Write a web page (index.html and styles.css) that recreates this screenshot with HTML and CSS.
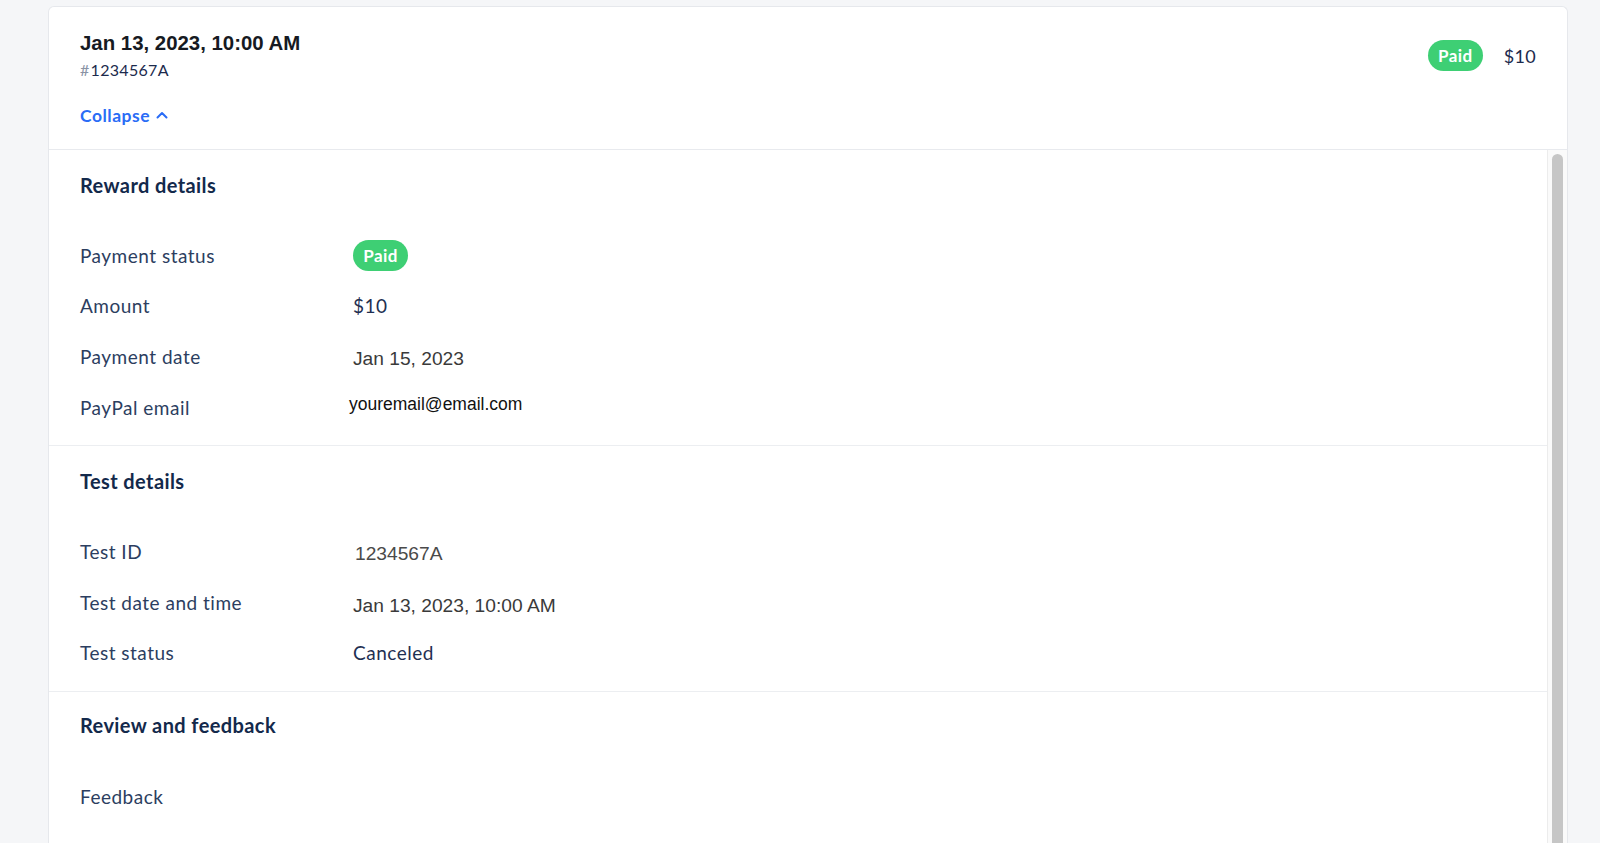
FILE: index.html
```html
<!DOCTYPE html>
<html lang="en">
<head>
<meta charset="utf-8">
<title>Reward details</title>
<link rel="stylesheet" href="styles.css">
</head>
<body>
<div class="card">
  <header class="card-head">
    <div class="head-left">
      <h1 class="title">Jan 13, 2023, 10:00 AM</h1>
      <div class="test-id"><span class="hash">#</span>1234567A</div>
      <a class="collapse" href="#">Collapse
        <svg class="chev" width="12" height="8" viewBox="0 0 12 8"><polyline points="1.5,6.5 6,2 10.5,6.5" fill="none" stroke="currentColor" stroke-width="2" stroke-linecap="round" stroke-linejoin="round"/></svg>
      </a>
    </div>
    <div class="head-right">
      <span class="badge">Paid</span>
      <span class="head-amount">$10</span>
    </div>
  </header>
  <div class="card-body">
    <div class="details">
      <section class="section">
        <h2 class="sec-title">Reward details</h2>
        <div class="rows">
          <div class="label">Payment status</div>
          <div class="value"><span class="badge">Paid</span></div>
          <div class="label">Amount</div>
          <div class="value ui">$10</div>
          <div class="label">Payment date</div>
          <div class="value plain">Jan 15, 2023</div>
          <div class="label">PayPal email</div>
          <div class="value email">youremail@email.com</div>
        </div>
      </section>
      <section class="section">
        <h2 class="sec-title">Test details</h2>
        <div class="rows">
          <div class="label">Test ID</div>
          <div class="value plain light id">1234567A</div>
          <div class="label">Test date and time</div>
          <div class="value plain low">Jan 13, 2023, 10:00 AM</div>
          <div class="label">Test status</div>
          <div class="value ui">Canceled</div>
        </div>
      </section>
      <section class="section last">
        <h2 class="sec-title">Review and feedback</h2>
        <div class="rows">
          <div class="label">Feedback</div>
          <div class="value"></div>
        </div>
      </section>
    </div>
    <div class="scrollbar"><div class="thumb"></div></div>
  </div>
</div>
</body>
</html>
```

FILE: styles.css
```css
html, body {
  margin: 0;
  padding: 0;
  height: 100%;
  overflow: hidden;
}
body {
  background: #f5f6f8;
  font-family: "Lato", "Liberation Sans", sans-serif;
  color: #2c3e5f;
}
.card {
  margin: 6px 0 0 48px;
  width: 1518px;
  background: #fff;
  border: 1px solid #e6e8ec;
  border-bottom: none;
  border-radius: 6px 6px 0 0;
  height: 900px;
  display: flex;
  flex-direction: column;
}
.card-head {
  display: flex;
  justify-content: space-between;
  align-items: flex-start;
  padding: 24px 31px 23px 31px;
  border-bottom: 1px solid #e8eaee;
}
.title {
  margin: 0;
  font-family: "Liberation Sans", Arial, sans-serif;
  font-weight: 700;
  font-size: 20.4px;
  line-height: 24px;
  color: #161a22;
}
.test-id {
  margin-top: 6px;
  font-size: 16px;
  line-height: 18px;
  letter-spacing: 0.3px;
  color: #1c2a4d;
}
.hash {
  color: #8a93a5;
  margin-right: 1px;
}
.collapse {
  margin-top: 27px;
  display: flex;
  align-items: center;
  gap: 6px;
  font-size: 17.5px;
  line-height: 20px;
  letter-spacing: 0.5px;
  font-weight: 700;
  color: #2a6cf6;
  text-decoration: none;
}
.chev { display: block; margin-top: -2px; }
.head-right {
  display: flex;
  align-items: center;
  gap: 21px;
  margin-top: 9px;
}
.badge {
  display: inline-flex;
  align-items: center;
  justify-content: center;
  width: 55px;
  height: 31px;
  border-radius: 16px;
  background: #3ecf74;
  color: #fff;
  font-weight: 700;
  font-size: 17px;
  letter-spacing: 0.4px;
}
.head-amount {
  font-size: 18px;
  letter-spacing: 0.3px;
  color: #1c2a4d;
}
.card-body {
  flex: 1;
  display: flex;
  min-height: 0;
}
.details {
  flex: 1;
}
.section {
  padding: 24px 31px 13px 31px;
  border-bottom: 1px solid #eceef1;
}
.section.last {
  border-bottom: none;
  padding-top: 22px;
}
.sec-title {
  margin: 0;
  font-size: 20px;
  line-height: 22px;
  letter-spacing: 0.4px;
  font-weight: 700;
  color: #13294b;
}
.rows {
  margin-top: 34px;
  display: grid;
  grid-template-columns: 273px 1fr;
  grid-auto-rows: 50.6px;
  align-items: center;
}
.last .rows { margin-top: 35px; }
.label {
  font-size: 19px;
  letter-spacing: 0.5px;
  color: #2c3e5f;
}
.value {
  font-size: 19px;
  letter-spacing: 0.5px;
  color: #2c3e5f;
}
.value.ui { color: #1f2f52; }
.plain {
  font-family: "Liberation Sans", Arial, sans-serif;
  font-size: 19.2px;
  letter-spacing: 0;
  color: #3a3a3a;
  padding-top: 5px;
}
.light { color: #4a4a4a; }
.id { padding-left: 2px; padding-top: 5px; }
.low { padding-top: 8px; }
.email {
  font-family: "Liberation Sans", Arial, sans-serif;
  font-size: 17.5px;
  letter-spacing: 0;
  color: #111;
  padding-bottom: 5px;
  margin-left: -4px;
}
.scrollbar {
  width: 20px;
  background: #fafafa;
  border-left: 1px solid #ececec;
  padding: 4px 4px 0 4px;
  box-sizing: border-box;
}
.thumb {
  width: 11px;
  height: 800px;
  background: #c6c6c6;
  border-radius: 6px;
}
```
